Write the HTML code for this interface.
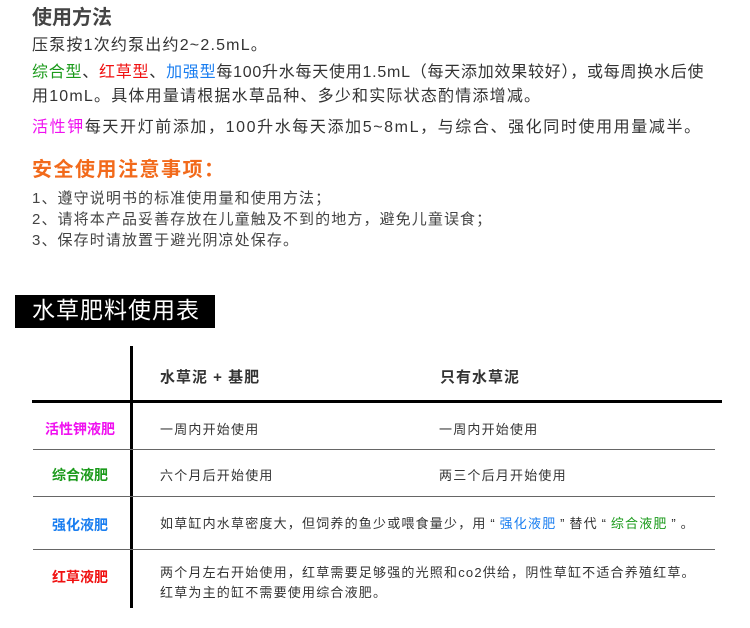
<!DOCTYPE html>
<html><head><meta charset="utf-8"><style>
body{margin:0;width:750px;height:628px;background:#fff;position:relative;overflow:hidden;font-family:"Liberation Sans","Noto Sans CJK SC",sans-serif;color:#333}
.a{position:absolute;white-space:nowrap;line-height:1}
.g{color:#1a9a1a}.r{color:#f01010}.b{color:#1a7ef0}.m{color:#f010f0}
.hl{position:absolute;background:#666;height:1px}
.c{font-size:13px;color:#333;letter-spacing:1.2px}
.q{display:inline-block;width:13px;text-align:center}
.l{font-size:14px;font-weight:bold;width:100px;text-align:center;left:30px}
.t{letter-spacing:1.2px}
</style></head><body>
<div class="a" style="left:32px;top:8px;font-size:20px;font-weight:bold;color:#444">使用方法</div>
<div class="a t" style="left:32px;top:38px;font-size:16px">压泵按1次约泵出约2~2.5mL。</div>
<div class="a" style="left:32px;top:65px;font-size:16px;letter-spacing:0.75px"><span class="g">综合型</span>、<span class="r">红草型</span>、<span class="b">加强型</span>每100升水每天使用1.5mL（每天添加效果较好），或每周换水后使</div>
<div class="a t" style="left:32px;top:89px;font-size:16px">用10mL。具体用量请根据水草品种、多少和实际状态酌情添增减。</div>
<div class="a" style="left:32px;top:120px;font-size:16px;letter-spacing:1.6px"><span class="m">活性钾</span>每天开灯前添加，100升水每天添加5~8mL，与综合、强化同时使用用量减半。</div>
<div class="a" style="left:32px;top:160px;font-size:20px;font-weight:bold;color:#f26a1b;letter-spacing:1.5px">安全使用注意事项：</div>
<div class="a" style="left:32px;top:191px;font-size:15px;color:#444;letter-spacing:1.1px">1、遵守说明书的标准使用量和使用方法；</div>
<div class="a" style="left:32px;top:212px;font-size:15px;color:#444;letter-spacing:1.1px">2、请将本产品妥善存放在儿童触及不到的地方，避免儿童误食；</div>
<div class="a" style="left:32px;top:233px;font-size:15px;color:#444;letter-spacing:1.1px">3、保存时请放置于避光阴凉处保存。</div>
<div style="position:absolute;left:15px;top:295px;width:200px;height:33px;background:#000"></div>
<div class="a" style="left:32px;top:299px;font-size:23px;color:#fff;letter-spacing:1px">水草肥料使用表</div>
<div style="position:absolute;left:130px;top:346px;width:3px;height:262px;background:#000"></div>
<div style="position:absolute;left:32px;top:400px;width:690px;height:3px;background:#000"></div>
<div class="hl" style="left:33px;top:449px;width:682px"></div>
<div class="hl" style="left:33px;top:496px;width:682px"></div>
<div class="hl" style="left:33px;top:549px;width:682px"></div>
<div class="a" style="left:160px;top:370px;font-size:15px;font-weight:bold;color:#333;letter-spacing:1px">水草泥 + 基肥</div>
<div class="a" style="left:440px;top:370px;font-size:15px;font-weight:bold;color:#333;letter-spacing:1px">只有水草泥</div>
<div class="a l m" style="top:422px">活性钾液肥</div>
<div class="a l g" style="top:468px">综合液肥</div>
<div class="a l b" style="top:518px">强化液肥</div>
<div class="a l r" style="top:570px">红草液肥</div>
<div class="a c" style="left:160px;top:423px">一周内开始使用</div>
<div class="a c" style="left:439px;top:423px">一周内开始使用</div>
<div class="a c" style="left:160px;top:469px">六个月后开始使用</div>
<div class="a c" style="left:439px;top:469px">两三个后月开始使用</div>
<div class="a c" style="left:160px;top:517px">如草缸内水草密度大，但饲养的鱼少或喂食量少，用<span class="q">“</span><span class="b">强化液肥</span><span class="q">”</span>替代<span class="q">“</span><span class="g">综合液肥</span><span class="q">”</span>。</div>
<div class="a c" style="left:160px;top:566px">两个月左右开始使用，红草需要足够强的光照和co2供给，阴性草缸不适合养殖红草。</div>
<div class="a c" style="left:160px;top:586px">红草为主的缸不需要使用综合液肥。</div>
</body></html>
